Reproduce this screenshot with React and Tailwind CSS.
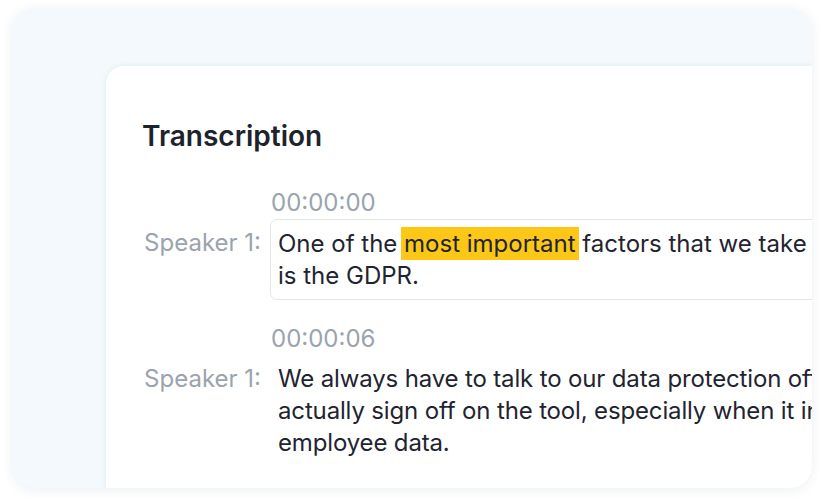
import React from 'react';

const font = { fontFamily: 'Inter, "Noto Sans", sans-serif' };

const entries = [
  {
    time: '00:00:00',
    speaker: 'Speaker 1:',
    boxed: true,
    tight: false,
    lines: [
      <>
        One of the{' '}
        <span className="inline-block bg-[#fcc716] px-[3px] leading-[33px] -mx-[3px]">most important</span>{' '}
        factors that we take into account
      </>,
      'is the GDPR.',
    ],
  },
  {
    time: '00:00:06',
    speaker: 'Speaker 1:',
    boxed: false,
    tight: true,
    lines: [
      'We always have to talk to our data protection officer to',
      'actually sign off on the tool, especially when it involves',
      'employee data.',
    ],
  },
];

const Entry = ({ entry }) => (
  <div className="grid grid-cols-[128px_1fr]">
    <div />
    <div className="text-[24px] leading-[28px] text-[#9aa3ae] mb-[2px]">{entry.time}</div>
    <div className="text-right pr-[10px] pt-[8px] text-[24px] leading-[32px] text-[#9aa3ae] whitespace-nowrap">
      {entry.speaker}
    </div>
    <div
      className={`w-[820px] -ml-px rounded-[7px] border px-[7px] py-[7px] text-[24px] leading-[32px] text-[#1f2430] whitespace-nowrap ${
        entry.boxed ? 'border-[#e3e7ea]' : 'border-transparent'
      } ${entry.tight ? 'tracking-[-0.15px]' : ''}`}
    >
      {entry.lines.map((line, i) => (
        <div key={i}>{line}</div>
      ))}
    </div>
  </div>
);

const App = () => {
  return (
    <div className="w-[824px] h-[504px] bg-white pt-[8px] pl-[12px] overflow-hidden" style={font}>
      <div className="w-[800px] h-[480px] rounded-[22px] bg-[#f3f9fc] shadow-[0_2px_12px_rgba(30,50,80,0.08)] overflow-hidden flex flex-col">
        <div className="mt-[58px] ml-[94px] flex-1 bg-white rounded-tl-[18px] shadow-[0_0_6px_rgba(30,50,80,0.07)] pl-[37px] pt-[52px] overflow-hidden">
          <h1 className="text-[28px] leading-[36px] font-semibold text-[#1d232c] mb-[35px] -ml-px">Transcription</h1>
          <div className="flex flex-col gap-[25px]">
            {entries.map((e, i) => (
              <Entry key={i} entry={e} />
            ))}
          </div>
        </div>
      </div>
    </div>
  );
};

export default App;
